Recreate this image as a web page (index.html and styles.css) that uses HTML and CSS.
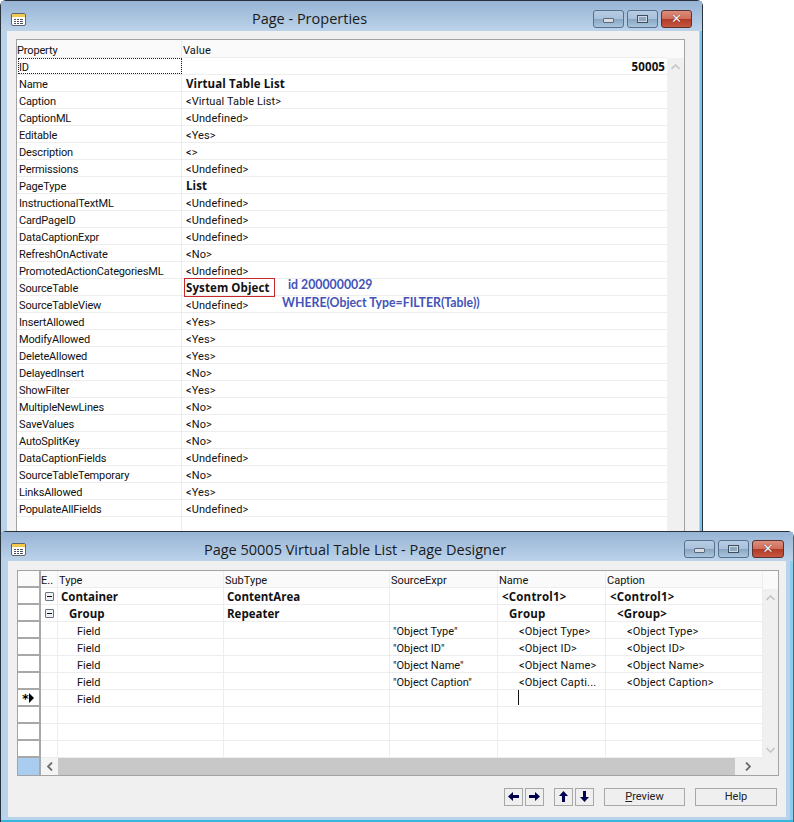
FILE: index.html
```html
<!DOCTYPE html>
<html lang="en">
<head>
<meta charset="utf-8">
<title>Page Designer</title>
<link rel="stylesheet" href="styles.css">
</head>
<body>
<svg class="defs" width="0" height="0" aria-hidden="true">
  <defs>
    <symbol id="win-icon" viewBox="0 0 15 13">
      <rect x=".5" y=".5" width="14" height="12" rx="1.5" fill="#fff" stroke="#5b6470"/>
      <rect x="1" y="1" width="13" height="3" fill="#f2c94e"/>
      <path d="M3 6h2v1H3zM6 6h2v1H6zM9 6h3v1H9zM3 8h2v1H3zM6 8h2v1H6zM9 8h3v1H9zM3 10h2v1H3zM6 10h2v1H6zM9 10h3v1H9z" fill="#49515c"/>
    </symbol>
    <symbol id="chev-up" viewBox="0 0 9 6"><path d="M.5 5 4.500 1l4 4" fill="none" stroke="currentColor" stroke-width="1.6"/></symbol>
    <symbol id="chev-down" viewBox="0 0 9 6"><path d="M.5 1l4 4 4-4" fill="none" stroke="currentColor" stroke-width="1.6"/></symbol>
    <symbol id="chev-left" viewBox="0 0 6 9"><path d="M5 .5 1 4.500l4 4" fill="none" stroke="currentColor" stroke-width="1.8"/></symbol>
    <symbol id="chev-right" viewBox="0 0 6 9"><path d="M1 .5l4 4-4 4" fill="none" stroke="currentColor" stroke-width="1.8"/></symbol>
    <symbol id="arrow-right" viewBox="0 0 11 9"><path d="M0 3h6V0l5 4.500-5 4.500V6H0z" fill="#00004f"/></symbol>
    <symbol id="arrow-left" viewBox="0 0 11 9"><path d="M11 3H5V0L0 4.500 5 9V6h6z" fill="#00004f"/></symbol>
    <symbol id="arrow-up" viewBox="0 0 9 11"><path d="M3 11V5H0l4.500-5L9 5H6v6z" fill="#00004f"/></symbol>
    <symbol id="arrow-down" viewBox="0 0 9 11"><path d="M3 0v6H0l4.500 5L9 6H6V0z" fill="#00004f"/></symbol>
  </defs>
</svg>

<main class="desktop">
  <section class="window win-props">
    <header class="titlebar">
      <svg class="win-icon"><use href="#win-icon"/></svg>
      <h1 class="title">Page - Properties</h1>
      <div class="controls">
        <span class="ctl"><i class="gl-min"></i></span>
        <span class="ctl"><i class="gl-max"></i></span>
        <span class="ctl ctl-close"><i class="gl-x">✕</i></span>
      </div>
    </header>
    <div class="client">
      <div class="grid props-grid">
        <div class="props-main">
          <div class="p-row p-head"><span class="p-k">Property</span><span class="p-v">Value</span></div>
          <div class="p-row"><span class="p-k p-focus">ID</span><span class="p-v p-num">50005</span></div>
          <div class="p-row"><span class="p-k">Name</span><span class="p-v b">Virtual Table List</span></div>
          <div class="p-row"><span class="p-k">Caption</span><span class="p-v">&lt;Virtual Table List&gt;</span></div>
          <div class="p-row"><span class="p-k">CaptionML</span><span class="p-v">&lt;Undefined&gt;</span></div>
          <div class="p-row"><span class="p-k">Editable</span><span class="p-v">&lt;Yes&gt;</span></div>
          <div class="p-row"><span class="p-k">Description</span><span class="p-v">&lt;&gt;</span></div>
          <div class="p-row"><span class="p-k">Permissions</span><span class="p-v">&lt;Undefined&gt;</span></div>
          <div class="p-row"><span class="p-k">PageType</span><span class="p-v b">List</span></div>
          <div class="p-row"><span class="p-k">InstructionalTextML</span><span class="p-v">&lt;Undefined&gt;</span></div>
          <div class="p-row"><span class="p-k">CardPageID</span><span class="p-v">&lt;Undefined&gt;</span></div>
          <div class="p-row"><span class="p-k">DataCaptionExpr</span><span class="p-v">&lt;Undefined&gt;</span></div>
          <div class="p-row"><span class="p-k">RefreshOnActivate</span><span class="p-v">&lt;No&gt;</span></div>
          <div class="p-row"><span class="p-k">PromotedActionCategoriesML</span><span class="p-v">&lt;Undefined&gt;</span></div>
          <div class="p-row"><span class="p-k">SourceTable</span><span class="p-v b">System Object</span></div>
          <div class="p-row"><span class="p-k">SourceTableView</span><span class="p-v">&lt;Undefined&gt;</span></div>
          <div class="p-row"><span class="p-k">InsertAllowed</span><span class="p-v">&lt;Yes&gt;</span></div>
          <div class="p-row"><span class="p-k">ModifyAllowed</span><span class="p-v">&lt;Yes&gt;</span></div>
          <div class="p-row"><span class="p-k">DeleteAllowed</span><span class="p-v">&lt;Yes&gt;</span></div>
          <div class="p-row"><span class="p-k">DelayedInsert</span><span class="p-v">&lt;No&gt;</span></div>
          <div class="p-row"><span class="p-k">ShowFilter</span><span class="p-v">&lt;Yes&gt;</span></div>
          <div class="p-row"><span class="p-k">MultipleNewLines</span><span class="p-v">&lt;No&gt;</span></div>
          <div class="p-row"><span class="p-k">SaveValues</span><span class="p-v">&lt;No&gt;</span></div>
          <div class="p-row"><span class="p-k">AutoSplitKey</span><span class="p-v">&lt;No&gt;</span></div>
          <div class="p-row"><span class="p-k">DataCaptionFields</span><span class="p-v">&lt;Undefined&gt;</span></div>
          <div class="p-row"><span class="p-k">SourceTableTemporary</span><span class="p-v">&lt;No&gt;</span></div>
          <div class="p-row"><span class="p-k">LinksAllowed</span><span class="p-v">&lt;Yes&gt;</span></div>
          <div class="p-row"><span class="p-k">PopulateAllFields</span><span class="p-v">&lt;Undefined&gt;</span></div>
          <div class="p-row p-last"><span class="p-k"></span><span class="p-v"></span></div>
        </div>
        <div class="vscroll props-scroll">
          <div class="vs-head"></div>
          <svg class="chev chev-v"><use href="#chev-up"/></svg>
        </div>
      </div>
    </div>
    <div class="red-box"></div>
    <p class="note note-id">id 2000000029</p>
    <p class="note note-where">WHERE(Object Type=FILTER(Table))</p>
  </section>

  <section class="window win-design">
    <header class="titlebar">
      <svg class="win-icon"><use href="#win-icon"/></svg>
      <h1 class="title">Page 50005 Virtual Table List - Page Designer</h1>
      <div class="controls">
        <span class="ctl"><i class="gl-min"></i></span>
        <span class="ctl"><i class="gl-max"></i></span>
        <span class="ctl ctl-close"><i class="gl-x">✕</i></span>
      </div>
    </header>
    <div class="client client-design">
      <div class="grid design-grid">
        <div class="d-top">
          <div class="d-main">
            <div class="d-row d-head"><span class="c-hdr"></span><span class="c-e">E..</span><span class="c-type">Type</span><span class="c-sub">SubType</span><span class="c-src">SourceExpr</span><span class="c-name">Name</span><span class="c-cap">Caption</span></div>
            <div class="d-row"><span class="c-hdr"></span><span class="c-e"><i class="minus"></i></span><span class="c-type b">Container</span><span class="c-sub b">ContentArea</span><span class="c-src"></span><span class="c-name b">&lt;Control1&gt;</span><span class="c-cap b">&lt;Control1&gt;</span></div>
            <div class="d-row"><span class="c-hdr"></span><span class="c-e"><i class="minus"></i></span><span class="c-type b i1">Group</span><span class="c-sub b">Repeater</span><span class="c-src"></span><span class="c-name b n1">Group</span><span class="c-cap b n1">&lt;Group&gt;</span></div>
            <div class="d-row"><span class="c-hdr"></span><span class="c-e"></span><span class="c-type i2">Field</span><span class="c-sub"></span><span class="c-src">"Object Type"</span><span class="c-name n2">&lt;Object Type&gt;</span><span class="c-cap n2">&lt;Object Type&gt;</span></div>
            <div class="d-row"><span class="c-hdr"></span><span class="c-e"></span><span class="c-type i2">Field</span><span class="c-sub"></span><span class="c-src">"Object ID"</span><span class="c-name n2">&lt;Object ID&gt;</span><span class="c-cap n2">&lt;Object ID&gt;</span></div>
            <div class="d-row"><span class="c-hdr"></span><span class="c-e"></span><span class="c-type i2">Field</span><span class="c-sub"></span><span class="c-src">"Object Name"</span><span class="c-name n2">&lt;Object Name&gt;</span><span class="c-cap n2">&lt;Object Name&gt;</span></div>
            <div class="d-row"><span class="c-hdr"></span><span class="c-e"></span><span class="c-type i2">Field</span><span class="c-sub"></span><span class="c-src">"Object Caption"</span><span class="c-name n2">&lt;Object Capti...</span><span class="c-cap n2">&lt;Object Caption&gt;</span></div>
            <div class="d-row"><span class="c-hdr c-new"><b class="star">*</b><i class="tri"></i></span><span class="c-e"></span><span class="c-type i2">Field</span><span class="c-sub"></span><span class="c-src"></span><span class="c-name"><i class="caret"></i></span><span class="c-cap"></span></div>
            <div class="d-row"><span class="c-hdr"></span><span class="c-e"></span><span class="c-type"></span><span class="c-sub"></span><span class="c-src"></span><span class="c-name"></span><span class="c-cap"></span></div>
            <div class="d-row"><span class="c-hdr"></span><span class="c-e"></span><span class="c-type"></span><span class="c-sub"></span><span class="c-src"></span><span class="c-name"></span><span class="c-cap"></span></div>
            <div class="d-row"><span class="c-hdr"></span><span class="c-e"></span><span class="c-type"></span><span class="c-sub"></span><span class="c-src"></span><span class="c-name"></span><span class="c-cap"></span></div>
          </div>
          <div class="vscroll design-scroll">
            <div class="vs-head"></div>
            <svg class="chev chev-v"><use href="#chev-up"/></svg>
            <svg class="chev chev-v chev-end"><use href="#chev-down"/></svg>
          </div>
        </div>
        <div class="d-bottom">
          <span class="corner-blue"></span>
          <span class="hs-btn"><svg class="chev chev-h"><use href="#chev-left"/></svg></span>
          <span class="hs-track"></span>
          <span class="hs-btn hs-right"><svg class="chev chev-h"><use href="#chev-right"/></svg></span>
          <span class="corner-end"></span>
        </div>
      </div>
      <div class="actions">
        <div class="arrow-pair">
          <button class="arrow-btn" type="button" aria-label="Left"><svg class="arr-h"><use href="#arrow-left"/></svg></button>
          <button class="arrow-btn" type="button" aria-label="Right"><svg class="arr-h"><use href="#arrow-right"/></svg></button>
        </div>
        <div class="arrow-pair">
          <button class="arrow-btn" type="button" aria-label="Up"><svg class="arr-v"><use href="#arrow-up"/></svg></button>
          <button class="arrow-btn" type="button" aria-label="Down"><svg class="arr-v"><use href="#arrow-down"/></svg></button>
        </div>
        <button class="btn btn-preview" type="button"><u>P</u>review</button>
        <button class="btn" type="button">Help</button>
      </div>
    </div>
  </section>
</main>
</body>
</html>
```
FILE: styles.css
```css
* { box-sizing: border-box; }
html, body { margin: 0; padding: 0; background: #fff; }
body { width: 794px; height: 822px; overflow: hidden; font: 11px/16px Roboto, "Open Sans", sans-serif; color: #111; }
.defs { position: absolute; }
.desktop { position: relative; width: 794px; height: 822px; overflow: hidden; }
i { font-style: normal; }
.b { font: 700 11.5px/18px "Open Sans", "Noto Sans", sans-serif; letter-spacing: 0; }

.window { position: absolute; left: 0; display: flex; flex-direction: column; border: 1px solid #27323c; border-radius: 6px 6px 0 0; background: #b9d3ec; }
.win-props { top: 0; width: 703px; height: 540px; border-bottom: 0; padding: 0 3px 0 6px; box-shadow: inset -2px 0 0 #7cc1ea; }
.win-design { top: 531px; width: 794px; height: 291px; padding: 0 7px 5px 7px; border-bottom: 0; border-right-color: #57646e; box-shadow: inset 0 -2px 0 #37b6dc, inset -3px 0 0 #8fcbec; }

.titlebar { flex: none; height: 30px; display: flex; align-items: center; margin: 0 -3px 0 -6px; padding: 6px 10px 0 10px; background: linear-gradient(#97b4d4, #bcd3ea); }
.win-design .titlebar { height: 29px; margin: 0 -7px; padding: 5px 9px 0 10px; }
.win-icon { width: 15px; height: 13px; flex: none; margin-top: 0; }
.title { flex: 1; margin: 0; font: 400 14.5px/20px "Open Sans", "Noto Sans", sans-serif; text-align: center; color: #1a1a1a; }
.win-design .title { padding-top: 1px; }
.controls { display: flex; gap: 3px; margin-top: -1px; }
.ctl { width: 31px; height: 18px; display: flex; align-items: center; justify-content: center; border: 1px solid #58708c; border-radius: 3px; background: linear-gradient(#b6cde4 0, #a9c1da 48%, #8aa6c2 52%, #a9c6de 100%); }
.ctl-close { background: linear-gradient(#dc8e7c 0, #cf6e5b 48%, #b13a27 52%, #c5573f 100%); border-color: #5a3232; }
.win-design .ctl-close { width: 32px; }
.gl-min { width: 11px; height: 5px; margin-top: 3px; background: #d9dde2; border: 1px solid #5b6a7a; border-radius: 1px; }
.gl-max { width: 11px; height: 8px; border: 1px solid #3f4d5c; box-shadow: inset 0 0 0 1px #cfdae4; background: #8ea7c0; }
.gl-x { font: 700 13px/13px "DejaVu Sans", sans-serif; color: #f2f2f2; text-shadow: 0 0 1px #4c1a12; }

.client { flex: 1; background: #f0f0f0; padding: 8px 14px 0 9px; min-height: 0; display: flex; flex-direction: column; }
.client-design { padding: 9px 7px 0 9px; }
.grid { border: 1px solid #a3a3a3; border-bottom: 0; background: #fff; }
.props-grid { display: flex; flex: 1; min-height: 0; }
.props-main { width: 650px; flex: none; }
.p-row { display: flex; height: 17px; line-height: 20px; border-bottom: 1px solid #ededed; }
.p-head { height: 18px; background: #fafafa; line-height: 21px; }
.p-last { height: 30px; border-bottom: 0; }
.p-k { width: 165px; flex: none; padding-left: 2px; border-right: 1px solid #ededed; white-space: nowrap; position: relative; letter-spacing: -.15px; }
.p-head .p-k { padding-left: 0; }
.p-v { flex: 1; padding-left: 4px; white-space: nowrap; letter-spacing: .1px; }
.p-head .p-v { padding-left: 1px; }
.p-focus { outline: 1px dotted #222; outline-offset: -1px; margin-left: 1px; width: 164px; padding-left: 1px; }
.p-num { text-align: right; font: 700 11.5px/18px "Open Sans", "Noto Sans", sans-serif; padding-right: 2px; }

.vscroll { flex: 1; background: #f0f0f0; color: #c6c6c6; display: flex; flex-direction: column; align-items: center; }
.vs-head { align-self: stretch; height: 18px; background: #fafafa; }
.chev { display: block; flex: none; }
.chev-v { width: 9px; height: 6px; margin-top: 6px; }
.chev-end { margin-top: auto; margin-bottom: 5px; }

.red-box { position: absolute; left: 183px; top: 277px; width: 91px; height: 19px; border: 1px solid #c8282c; }
.note { position: absolute; margin: 0; font: 700 12.3px/16px Lato, "Open Sans", sans-serif; color: #4353b8; white-space: nowrap; }
.note-id { left: 287px; top: 276px; }
.note-where { left: 281px; top: 294px; }

.design-grid { display: flex; flex-direction: column; height: 206px; flex: none; border-bottom: 1px solid #a3a3a3; background: #fff; }
.d-top { display: flex; height: 187px; flex: none; }
.d-main { width: 745px; flex: none; }
.d-row { display: flex; height: 17px; line-height: 20px; }
.d-row > span { flex: none; height: 17px; border-bottom: 1px solid #ededed; border-right: 1px solid #ededed; white-space: nowrap; overflow: hidden; }
.d-head { background: #fafafa; }
.d-head > span { border-right-color: #ededed; }
.c-hdr { width: 23px; background: #fff; border-right: 2px solid #a8a8a8 !important; border-bottom: 2px solid #a8a8a8 !important; }
.d-head .c-hdr { background: #fafafa; }
.c-e { width: 17px; padding-left: 0; position: relative; }
.c-type { width: 166px; padding-left: 3px; }
.c-sub { width: 166px; padding-left: 3px; }
.c-src { width: 108px; padding-left: 3px; }
.c-name { width: 108px; padding-left: 4px; position: relative; letter-spacing: .2px; }
.c-cap { flex: 1 !important; padding-left: 4px; letter-spacing: .2px; }
.d-head .c-type, .d-head .c-sub, .d-head .c-src, .d-head .c-name, .d-head .c-cap { padding-left: 1px; letter-spacing: 0; }
.i1 { padding-left: 11px; }
.i2 { padding-left: 19px; }
.n1 { padding-left: 11px; }
.n2 { padding-left: 21px; }
.minus { position: absolute; left: 4px; top: 4px; width: 9px; height: 9px; border: 1px solid #6a7480; border-radius: 1px; background: #eef1f5; }
.minus::after { content: ""; position: absolute; left: 1px; top: 3px; width: 5px; height: 1px; background: #111; }
.c-new { display: flex; align-items: center; padding-left: 4px; gap: 0; }
.star { font: 700 13px/13px "DejaVu Sans", sans-serif; color: #000; margin-top: 1px; }
.tri { width: 0; height: 0; border-left: 5px solid #000; border-top: 5px solid transparent; border-bottom: 5px solid transparent; }
.caret { position: absolute; left: 20px; top: 0; width: 1px; height: 15px; background: #111; }
.design-scroll { padding-top: 0; }

.d-bottom { display: flex; flex: 1; background: #f0f0f0; }
.corner-blue { width: 23px; background: #a9cdee; border-right: 2px solid #a8a8a8; }
.hs-btn { width: 17px; color: #6d6d6d; display: flex; align-items: center; justify-content: center; background: #f4f4f4; }
.hs-track { flex: 1; background: #c8c8c8; }
.hs-right { width: 26px; color: #6d6d6d; background: #f0f0f0; }
.corner-end { width: 17px; }
.chev-h { width: 6px; height: 9px; }

.actions { display: flex; justify-content: flex-end; align-items: center; height: 17px; margin: 12px 2px 0 0; }
.arrow-pair { display: flex; gap: 2px; margin-right: 10px; }
.arrow-btn { width: 19px; height: 18px; padding: 0; display: flex; align-items: center; justify-content: center; border: 1px solid #a8a8a8; background: #efefef; }
.arr-h { width: 11px; height: 9px; }
.arr-v { width: 9px; height: 11px; }
.btn { width: 82px; height: 18px; padding: 0; border: 1px solid #a8a8a8; background: #efefef; font: 11px/15px Roboto, "Open Sans", sans-serif; color: #222; }
.btn-preview { width: 81px; }
.btn + .btn { margin-left: 10px; }
```
